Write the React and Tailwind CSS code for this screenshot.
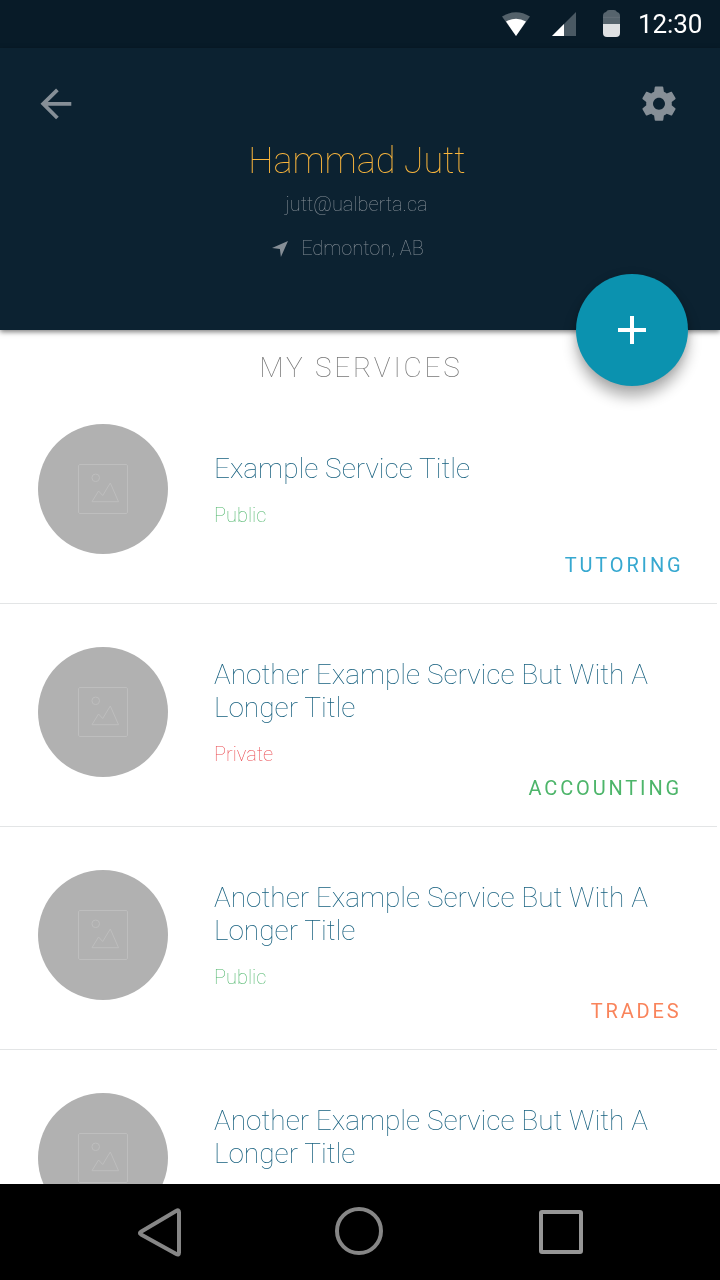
const services = [
  { title: 'Example Service Title', status: 'Public', category: 'TUTORING', color: 'text-[#36a8d0]', shift: 'mr-[36.5px]' },
  { title: 'Another Example Service But With A Longer Title', status: 'Private', category: 'ACCOUNTING', color: 'text-[#4db56a]', shift: 'mr-[38px]' },
  { title: 'Another Example Service But With A Longer Title', status: 'Public', category: 'TRADES', color: 'text-[#f9845b]', shift: 'mr-[38.5px]' },
  { title: 'Another Example Service But With A Longer Title' },
];

function StatusBar() {
  return (
    <div className="flex h-12 shrink-0 items-center bg-[#081b28] pl-[500px] text-white">
      <svg width="120" height="48" viewBox="500 0 120 48" className="shrink-0">
        <path d="M502 16.5Q516 8 530 16.5L516 36Z" fill="#53616a" />
        <path d="M506 21.5Q516 16 526 21.5L516 36Z" fill="#fff" />
        <path d="M576 12V36H552Z" fill="#4a5963" />
        <path d="M564 24V36H552Z" fill="#fff" />
        <path d="M603 24V16a4 4 0 0 1 3-4q1-2 3-2h5q2 0 3 2a4 4 0 0 1 3 4v8Z" fill="#56646d" />
        <path d="M603 17.3h17" stroke="#6a767e" strokeWidth=".7" />
        <path d="M603 24h17v9a4 4 0 0 1-4 4h-9a4 4 0 0 1-4-4Z" fill="#dfe1e3" />
      </svg>
      <span className="ml-[17.5px] text-[26px] leading-none tracking-[-0.1px] will-change-transform">12:30</span>
    </div>
  );
}

function Header() {
  return (
    <header className="relative z-10 flex h-[282px] shrink-0 flex-col bg-[#0c2231] shadow-[0_2px_5px_rgba(0,0,0,0.5)]">
      <div className="flex h-[95px] shrink-0 items-start justify-between pt-[35px] pr-[40px] pl-[38px]">
        <svg width="42" height="42" viewBox="38 83 42 42" fill="none" stroke="#868f97" strokeWidth="3.8">
          <path d="M71.3 103.8H43M57.4 89.8L43.2 103.8L57.4 118" />
        </svg>
        <svg width="42" height="42" viewBox="-.3 -.1 24.6 24.6" fill="#868f97">
          <path d="M19.43 12.98c.04-.32.07-.64.07-.98s-.03-.66-.07-.98l2.11-1.65c.19-.15.24-.42.12-.64l-2-3.46c-.12-.22-.39-.3-.61-.22l-2.49 1c-.52-.4-1.08-.73-1.69-.98l-.38-2.65C14.46 2.18 14.25 2 14 2h-4c-.25 0-.46.18-.49.42l-.38 2.65c-.61.25-1.17.59-1.69.98l-2.49-1c-.23-.09-.49 0-.61.22l-2 3.46c-.13.22-.07.49.12.64l2.11 1.65c-.04.32-.07.65-.07.98s.03.66.07.98l-2.11 1.65c-.19.15-.24.42-.12.64l2 3.46c.12.22.39.3.61.22l2.49-1c.52.4 1.08.73 1.69.98l.38 2.65c.03.24.24.42.49.42h4c.25 0 .46-.18.49-.42l.38-2.65c.61-.25 1.17-.59 1.69-.98l2.49 1c.23.09.49 0 .61-.22l2-3.46c.12-.22.07-.49-.12-.64l-2.11-1.65zM12 15.5c-1.93 0-3.5-1.57-3.5-3.5s1.57-3.5 3.5-3.5 3.5 1.57 3.5 3.5-1.57 3.5-3.5 3.5z" />
        </svg>
      </div>
      <div className="flex flex-col items-center pr-[6px] font-thin will-change-transform">
        <h1 className="-mt-[3px] text-[36px] leading-[42px] tracking-[-0.1px] text-[#fbb63c]">Hammad Jutt</h1>
        <p className="mt-[10px] mr-[1px] text-[20px] leading-6 text-[#868f97]">jutt@ualberta.ca</p>
        <p className="mt-5 mr-[18px] flex items-center gap-[13px] text-[20px] leading-6 text-[#868f97]">
          <svg width="16" height="16" viewBox="0 0 16 16" fill="#868f97" className="shrink-0 translate-y-px">
            <path d="M16 0L8.9 16L7.9 8L0 7Z" />
          </svg>
          Edmonton, AB
        </p>
      </div>
      <button
        aria-label="Add service"
        className="absolute top-[226px] left-[576px] flex size-28 items-center justify-center rounded-full bg-[#0b92af] shadow-[0_11px_14px_rgba(0,0,0,0.3),0_0_8px_rgba(0,0,0,0.12)]"
      >
        <svg width="28" height="28" viewBox="0 0 28 28" stroke="#fff" strokeWidth="4">
          <path d="M0 14H28M14 0V28" />
        </svg>
      </button>
    </header>
  );
}

function Placeholder() {
  return (
    <div className="flex size-[130px] shrink-0 items-center justify-center rounded-full bg-[#b1b1b1]">
      <svg width="50" height="50" viewBox="0 0 50 50" fill="none" stroke="#bebebe" strokeWidth="1">
        <rect x=".5" y=".5" width="49" height="49" rx="1.5" />
        <circle cx="17.7" cy="13.8" r="3.8" />
        <path d="M14 37.7L20.5 27L24.7 31.5L32.3 19L40.5 37.7Z" />
      </svg>
    </div>
  );
}

function ServiceRow({ title, status, category, color, shift }) {
  return (
    <li className="flex h-[223px] shrink-0 flex-col pt-[44px]">
      <div className="flex h-[130px] shrink-0 items-center gap-[46px] pl-[38px]">
        <Placeholder />
        <div className="w-[450px] font-thin">
          <h3 className="text-[28px] leading-[33px] text-[#17607f]">{title}</h3>
          <p className={`mt-[18px] h-6 text-[20px] leading-6 ${status === 'Public' ? 'text-[#4db56a]' : 'text-[#ea4a50]'}`}>{status}</p>
        </div>
      </div>
      {category && <p className={`-mt-px self-end text-[20px] leading-6 tracking-[2.85px] ${color} ${shift}`}>{category}</p>}
      <div className="mt-auto mr-[3px] h-px shrink-0 translate-y-px bg-[#e3e5e6]" />
    </li>
  );
}

function NavBar() {
  return (
    <nav className="flex h-24 shrink-0 bg-black">
      <svg width="720" height="96" viewBox="0 1184 720 96" fill="none" stroke="#868686" strokeWidth="4" strokeLinejoin="round">
        <path d="M176.5 1210.8Q179 1209.2 179 1212.3V1252.5Q179 1255.6 176.3 1254L141 1234.4Q138.8 1233 141 1231.7Z" />
        <circle cx="359" cy="1231" r="22" />
        <rect x="541" y="1212" width="40" height="40" rx="1" stroke="#969696" />
      </svg>
    </nav>
  );
}

export default function App() {
  return (
    <div className="flex h-[1280px] w-[720px] flex-col overflow-hidden bg-white font-[Roboto,sans-serif]">
      <StatusBar />
      <Header />
      <main className="flex min-h-0 flex-1 flex-col overflow-hidden will-change-transform">
        <h2 className="h-[50px] shrink-0 pt-[21px] pl-[2px] text-center text-[28px] leading-[33px] font-thin tracking-[2.8px] text-[#777]">MY SERVICES</h2>
        <ul className="flex flex-col">
          {services.map((service, i) => (
            <ServiceRow key={i} {...service} />
          ))}
        </ul>
      </main>
      <NavBar />
    </div>
  );
}
